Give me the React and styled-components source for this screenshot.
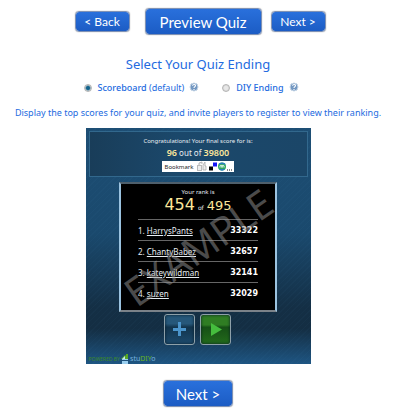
import React from "react";
import styled, { createGlobalStyle } from "styled-components";

const GlobalStyle = createGlobalStyle`
  * { box-sizing: border-box; }
  body { margin: 0; background: #fff; color: #236be0; font-family: "Noto Sans", sans-serif; }
  button { font: inherit; cursor: pointer; }
`;

const Page = styled.main`
  display: flex;
  flex-direction: column;
  align-items: center;
  padding: 8px 4px 8px 0;
`;

const NavBar = styled.nav`
  display: flex;
  align-items: center;
  padding-left: 4px;
`;

const NavButton = styled.button`
  width: ${(p) => (p.$size === "large" ? 117 : p.$size === "medium" ? 70 : 55)}px;
  height: ${(p) => (p.$size ? 27 : 21)}px;
  padding: 0;
  border: 1px solid #7f92b5;
  border-radius: 4px;
  background: linear-gradient(#2970dc, #1c5cc4) padding-box;
  box-shadow: 0 0 1px #777;
  color: #fff;
  font-family: Lato, sans-serif;
  font-size: ${(p) => (p.$size ? 15 : 12)}px;
  line-height: 16px;
  white-space: nowrap;
`;

const PreviewSlot = styled.div`
  padding: 0 9px 0 15px;
`;

const Title = styled.h1`
  margin: 18px 0 0;
  font-size: 13px;
  font-weight: 400;
  line-height: 22px;
`;

const Options = styled.div`
  display: flex;
  gap: 23px;
  margin-top: 5px;
  padding-right: 14px;
`;

const Option = styled.div`
  display: flex;
  align-items: center;
  height: 16px;
`;

const OptionLabel = styled.label`
  display: flex;
  align-items: center;
  font-size: 9px;
  font-weight: 500;
  line-height: 16px;
  white-space: pre;
`;

const Light = styled.span`
  font-weight: 400;
`;

const Radio = styled.input`
  appearance: none;
  width: 8px;
  height: 8px;
  margin: 0 6px 0 0;
  border: 1px solid #b4b4b4;
  border-radius: 50%;
  background: radial-gradient(circle, #e8e8e8 35%, #c9c9c9);
  &:checked { background: radial-gradient(circle, #12638c 35%, #c4ced2 70%); }
`;

const HelpButton = styled.button`
  display: flex;
  margin: 0 0 3px 5px;
  padding: 0;
  border: 0;
  background: none;
`;

const Description = styled.p`
  margin: 9px 0 0;
  font-size: 9px;
  line-height: 16px;
  white-space: nowrap;
`;

const Game = styled.section`
  display: flex;
  flex-direction: column;
  align-items: center;
  width: 225px;
  margin-top: 7px;
  padding: 3px 3px 0;
  background:
    repeating-linear-gradient(135deg, transparent 0 3px, rgba(90, 160, 210, 0.03) 3px 4px),
    linear-gradient(#1d4e74 0%, #1a496d 45%, #142f45 76%, #142e43 85%, #1e5582 100%);
  color: #e6edf2;
`;

const Summary = styled.header`
  display: flex;
  flex-direction: column;
  align-items: center;
  width: 100%;
  height: 46px;
  padding-top: 4px;
  border: 1px solid #32688d;
  background: linear-gradient(90deg, #193d59, #1b486b 40%, #1b4668);
  font-size: 6px;
  line-height: 10px;
`;

const Score = styled.div`
  font-size: 8px;
  line-height: 14px;
`;

const Gold = styled.b`
  color: #fbe69b;
  font-size: 9px;
  font-weight: 600;
`;

const Bookmark = styled.button`
  display: flex;
  align-items: center;
  gap: 3px;
  height: 11px;
  margin-top: 1px;
  padding: 0 1px 0 2px;
  border: 0;
  background: #fff;
  color: #222;
`;

const Board = styled.div`
  position: relative;
  width: 158px;
  height: 130px;
  margin-top: 5px;
  padding: 4px 17px 0;
  border: 2px solid;
  border-color: #4e5f6c #9bc3e0 #7b8289;
  background: #000;
  text-align: center;
`;

const RankLabel = styled.div`
  font-size: 6px;
  line-height: 9px;
`;

const Rank = styled.div`
  height: 22px;
  color: #fbe69b;
  font-family: "DejaVu Sans", sans-serif;
  font-size: 16px;
  line-height: 15px;
`;

const RankTotal = styled.span`
  font-size: 13px;
`;

const Of = styled.span`
  margin: 0 3px;
  color: #e6edf2;
  font-size: 6px;
`;

const Scores = styled.table`
  width: 100%;
  border-collapse: collapse;
  text-align: left;
  font-size: 8px;
  line-height: 10px;
`;

const Row = styled.tr`
  height: 21px;
  border-top: 1px solid #666;
`;

const Cell = styled.td`
  padding: 2px 0 0;
  white-space: nowrap;
  ${(p) => p.$points && "text-align: right; font-family: 'DejaVu Sans', sans-serif; font-weight: 700; color: #fff;"}
`;

const Player = styled.a`
  color: inherit;
`;

const Watermark = styled.span`
  position: absolute;
  top: 50%;
  left: 50%;
  transform: translate(-50%, -50%) rotate(-35deg);
  color: rgba(150, 150, 150, 0.5);
  font-size: 39px;
  line-height: 40px;
  pointer-events: none;
`;

const Actions = styled.div`
  display: flex;
  gap: 5px;
  margin-top: 2px;
  padding-right: 2px;
`;

const ActionButton = styled.button`
  display: grid;
  place-items: center;
  width: 31px;
  height: 31px;
  padding: 0;
  border: 1px solid #8ea0a9;
  border-radius: 3px;
  background: ${(p) => (p.$green
    ? "linear-gradient(#2f7d23 0 34%, #165016 42%, #236b1b)"
    : "linear-gradient(#26577a 0 30%, #12344d 42%, #1d4a6d)")};
  box-shadow: inset 0 0 3px #061a25;
`;

const Powered = styled.footer`
  display: flex;
  align-items: center;
  align-self: stretch;
  height: 11px;
  margin-top: 8px;
  color: #3d8a26;
  font-size: 5px;
  line-height: 10px;
  white-space: nowrap;
`;

const Brand = styled.span`
  margin-left: 1px;
  color: #78b4df;
  font-size: 7px;
`;

const BrandAccent = styled.span`
  color: #65b51c;
`;

const BottomNav = styled.div`
  display: flex;
  margin-top: 16px;
`;

const players = [
  ["HarrysPants", "33322"],
  ["ChantyBabez", "32657"],
  ["kateywildman", "32141"],
  ["suzen", "32029"],
];

function HelpIcon() {
  return (
    <svg width="10" height="10" viewBox="0 0 10 10" aria-hidden="true">
      <circle cx="5" cy="5" r="4" fill="#7398c2" stroke="#c6d6e6" />
      <path d="M3.5 3.8C3.6 2 6.6 2 6.5 3.8C6.4 4.7 5 4.7 5 6M5 7v1" fill="none" stroke="#fff" strokeWidth="1.1" />
    </svg>
  );
}

function ShareIcons() {
  return (
    <svg width="36" height="11" viewBox="0 0 36 11" aria-hidden="true">
      <rect x="0.5" y="4.5" width="4" height="5" fill="#eee" stroke="#bbb" />
      <path d="M2 4V2l3-1v2M6 9V4l2-3v4h1v4z" fill="#eee" stroke="#aaa" strokeWidth=".8" />
      <path d="M12 5.5h4v4h-4z" fill="#000" />
      <path d="M16 1.5h4v4h-4z" fill="#1515f5" />
      <circle cx="25" cy="5.5" r="4" fill="#2fa85b" />
      <path d="M22 3.5a4 4 0 0 1 6 0M22.5 8a4 4 0 0 0 5 0" fill="none" stroke="#2877cf" strokeWidth="1.3" />
      <path d="M23 6.5V5c0-1 2-1 2 0v1.5V5c0-1 2-1 2 0v1.5" fill="none" stroke="#fff" strokeWidth=".9" />
      <path d="M30 9h1M32 9h1M34 9h1" stroke="#111" strokeWidth="1.2" />
    </svg>
  );
}

function HouseIcon() {
  return (
    <svg width="8" height="10" viewBox="0 0 8 10" aria-hidden="true">
      <path d="M0 5 4 1l1 1V0h2v5z" fill="#58a825" />
      <path d="M1 5h6v1H1zM1 7h6v3H1z" fill="#99ceef" />
      <path d="M1 5 4 2v3z" fill="#c3e3f3" />
    </svg>
  );
}

export default function App() {
  return (
    <>
      <GlobalStyle />
      <Page>
        <NavBar>
          <NavButton>&lt; Back</NavButton>
          <PreviewSlot><NavButton $size="large">Preview Quiz</NavButton></PreviewSlot>
          <NavButton>Next &gt;</NavButton>
        </NavBar>
        <Title>Select Your Quiz Ending</Title>
        <Options>
          <Option>
            <OptionLabel>
              <Radio type="radio" name="ending" defaultChecked />
              Scoreboard <Light>(default)</Light>
            </OptionLabel>
            <HelpButton aria-label="About Scoreboard"><HelpIcon /></HelpButton>
          </Option>
          <Option>
            <OptionLabel><Radio type="radio" name="ending" />DIY Ending</OptionLabel>
            <HelpButton aria-label="About DIY Ending"><HelpIcon /></HelpButton>
          </Option>
        </Options>
        <Description>Display the top scores for your quiz, and invite players to register to view their ranking.</Description>
        <Game>
          <Summary>
            Congratulations! Your final score for is:
            <Score><Gold>96</Gold> out of <Gold>39800</Gold></Score>
            <Bookmark>Bookmark<ShareIcons /></Bookmark>
          </Summary>
          <Board>
            <RankLabel>Your rank is</RankLabel>
            <Rank>454<Of>of</Of><RankTotal>495</RankTotal></Rank>
            <Scores>
              <tbody>
                {players.map(([name, points], i) => (
                  <Row key={name}>
                    <Cell>{i + 1}. <Player href="#">{name}</Player></Cell>
                    <Cell $points>{points}</Cell>
                  </Row>
                ))}
              </tbody>
            </Scores>
            <Watermark>EXAMPLE</Watermark>
          </Board>
          <Actions>
            <ActionButton aria-label="Add">
              <svg width="17" height="17" viewBox="0 0 17 17"><path d="M7 1h3v6h5v3h-5v5H7v-5H2V7h5z" fill="#4b94cb" /></svg>
            </ActionButton>
            <ActionButton $green aria-label="Play">
              <svg width="17" height="17" viewBox="0 0 17 17"><path d="M4 2v13l11-6.5z" fill="#45bd3d" /></svg>
            </ActionButton>
          </Actions>
          <Powered>POWERED BY&nbsp;<HouseIcon /><Brand>stu<BrandAccent>DIY</BrandAccent>o</Brand></Powered>
        </Game>
        <BottomNav><NavButton $size="medium">Next &gt;</NavButton></BottomNav>
      </Page>
    </>
  );
}
